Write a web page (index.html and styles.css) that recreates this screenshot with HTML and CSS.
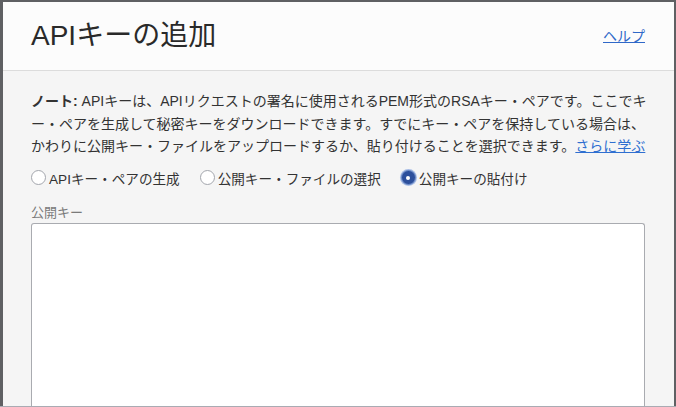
FILE: index.html
```html
<!DOCTYPE html>
<html lang="ja">
<head>
<meta charset="utf-8">
<link rel="stylesheet" href="styles.css">
</head>
<body>
<div class="frame">
  <div class="dialog">
    <header class="header">
      <h1 class="title">APIキーの追加</h1>
      <a class="help" href="#">ヘルプ</a>
    </header>
    <div class="body">
      <p class="note"><span class="line"><b>ノート:</b> APIキーは、APIリクエストの署名に使用されるPEM形式のRSAキー・ペアです。ここでキ</span><span class="line">ー・ペアを生成して秘密キーをダウンロードできます。すでにキー・ペアを保持している場合は、</span><span class="line">かわりに公開キー・ファイルをアップロードするか、貼り付けることを選択できます。<a class="link" href="#">さらに学ぶ</a></span></p>
      <div class="radios">
        <label class="radio"><span class="dot"></span>APIキー・ペアの生成</label>
        <label class="radio"><span class="dot"></span>公開キー・ファイルの選択</label>
        <label class="radio"><span class="dot on"></span>公開キーの貼付け</label>
      </div>
      <div class="field-label">公開キー</div>
      <div class="textarea"></div>
    </div>
  </div>
</div>
</body>
</html>
```
FILE: styles.css
```css
html, body {
  margin: 0;
  padding: 0;
  height: 407px;
  overflow: hidden;
  background: #5f6063;
  font-family: "Liberation Sans", "Noto Sans CJK JP", sans-serif;
}
.frame {
  box-sizing: border-box;
  height: 407px;
  padding: 2px 2px 0 3px;
  border-bottom: 1px solid #a9abb3;
  display: flex;
}
.dialog {
  flex: 1;
  background: #f5f5f5;
  display: flex;
  flex-direction: column;
  overflow: hidden;
}
.header {
  height: 69px;
  flex: none;
  box-sizing: border-box;
  background: #fcfcfc;
  border-bottom: 1px solid #dcdcdc;
  padding: 0 29px 0 28px;
  display: flex;
  align-items: center;
  justify-content: space-between;
}
.title {
  margin: 0;
  font-size: 28px;
  font-weight: normal;
  color: #2a2a2a;
  line-height: 32px;
}
.help {
  font-size: 14px;
  color: #2f68c8;
  text-decoration: underline;
  margin-top: -2px;
}
.body {
  flex: 1;
  padding: 19px 29px 0 28px;
  display: flex;
  flex-direction: column;
}
.note {
  margin: 0;
  font-size: 14px;
  line-height: 22.5px;
  color: #333;
}
.note .line {
  display: block;
  white-space: nowrap;
}
.note b {
  font-weight: bold;
}
.link {
  color: #2f6fd0;
  text-decoration: underline;
}
.radios {
  margin-top: 10px;
  display: flex;
  gap: 20px;
  height: 20px;
  align-items: center;
}
.radio {
  display: flex;
  align-items: center;
  gap: 3px;
  font-size: 13.6px;
  color: #333;
}
.dot {
  width: 13px;
  height: 13px;
  border-radius: 50%;
  border: 1px solid #a3a6ad;
  background: #fff;
  box-sizing: content-box;
  display: flex;
  align-items: center;
  justify-content: center;
}
.dot.on {
  background: #2c4f9c;
  border-color: #6d8cc7;
  box-shadow: 0 0 0 1px #a8bde6;
}
.dot.on::after {
  content: "";
  width: 4px;
  height: 4px;
  border-radius: 50%;
  background: #fff;
}
.field-label {
  margin-top: 17px;
  font-size: 13px;
  line-height: 16px;
  color: #7a7a7a;
}
.textarea {
  margin-top: 2px;
  flex: 1;
  background: #fff;
  border: 1px solid #a9abb0;
  border-bottom: none;
  border-radius: 3px 3px 0 0;
}
```
